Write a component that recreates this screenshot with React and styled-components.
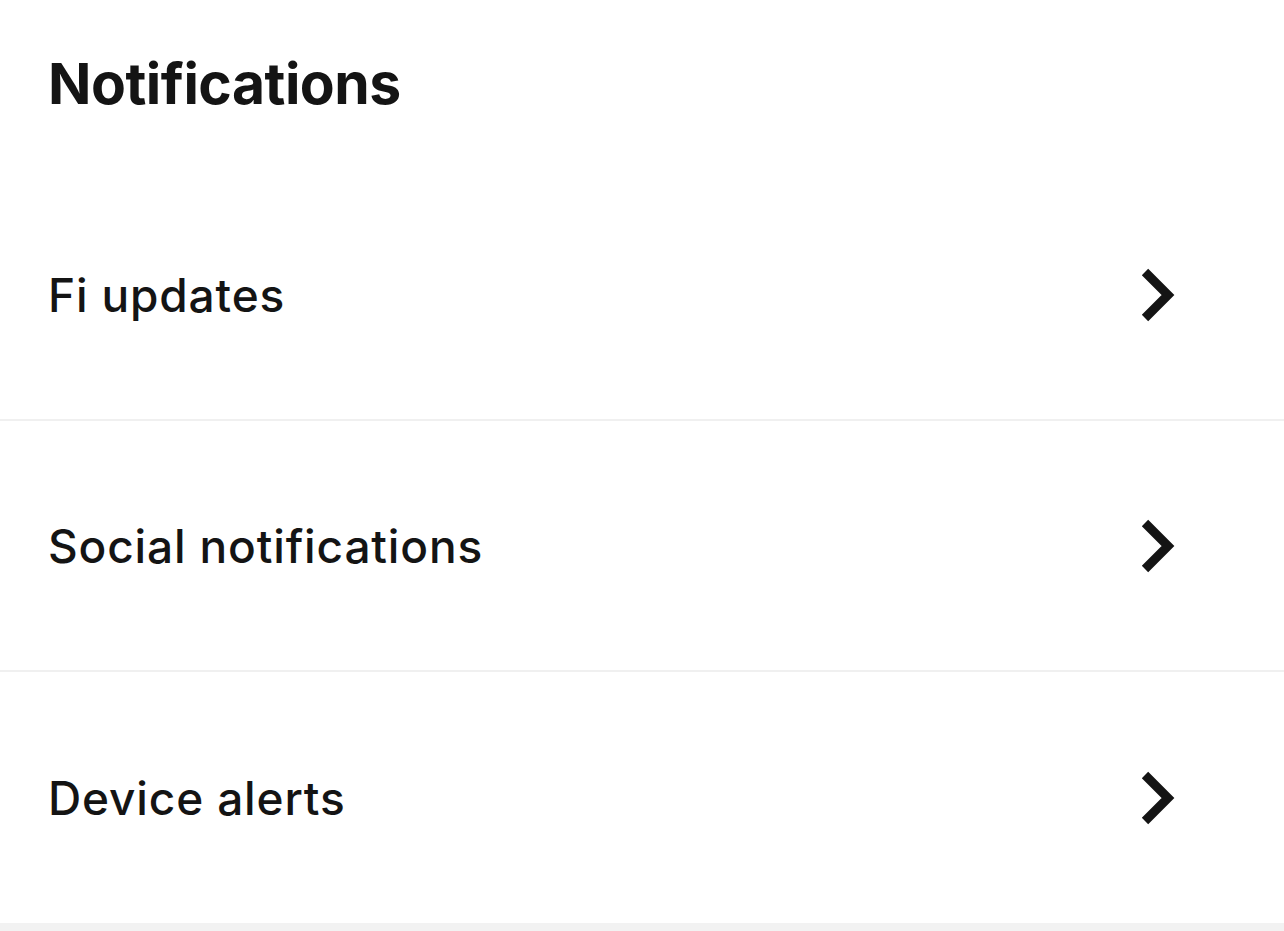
import React from "react"
import styled, { createGlobalStyle } from "styled-components"

const GlobalStyle = createGlobalStyle`
  html, body {
    margin: 0;
    padding: 0;
    background: #f2f2f2;
  }
  body {
    font-family: Inter, "Noto Sans", "Liberation Sans", sans-serif;
    color: #141414;
  }
`

const items = ["Fi updates", "Social notifications", "Device alerts"]

export default function App() {
  return (
    <>
      <GlobalStyle />
      <Page>
        <Header>
          <Title>Notifications</Title>
        </Header>
        <List>
          {items.map((label, i) => (
            <Row key={label} last={i === items.length - 1}>
              <Label>{label}</Label>
              <Chevron />
            </Row>
          ))}
        </List>
      </Page>
    </>
  )
}

const Chevron = () => (
  <ChevronBox viewBox="0 0 36 56" aria-hidden="true">
    <path
      d="M5 5 L28 28 L5 51"
      fill="none"
      stroke="#141414"
      strokeWidth="9"
      strokeLinecap="butt"
      strokeLinejoin="miter"
    />
  </ChevronBox>
)

const Page = styled.div`
  background: #ffffff;
  width: 100%;
`

const Header = styled.header`
  height: 170px;
  padding: 0 48px;
  box-sizing: border-box;
  display: flex;
  align-items: flex-start;
`

const Title = styled.h1`
  margin: 51px 0 0;
  font-size: 57px;
  font-weight: 700;
  letter-spacing: -0.5px;
  line-height: 66px;
`

const List = styled.div`
  display: flex;
  flex-direction: column;
`

const Row = styled.div`
  height: 251px;
  box-sizing: border-box;
  display: flex;
  align-items: center;
  justify-content: space-between;
  padding: 0 108px 0 48px;
  border-bottom: ${(p) => (p.last ? "none" : "2px solid #f0f0f0")};
`

const Label = styled.span`
  font-size: 46px;
  font-weight: 500;
  letter-spacing: 0.85px;
`

const ChevronBox = styled.svg`
  width: 36px;
  height: 56px;
  flex: none;
`
